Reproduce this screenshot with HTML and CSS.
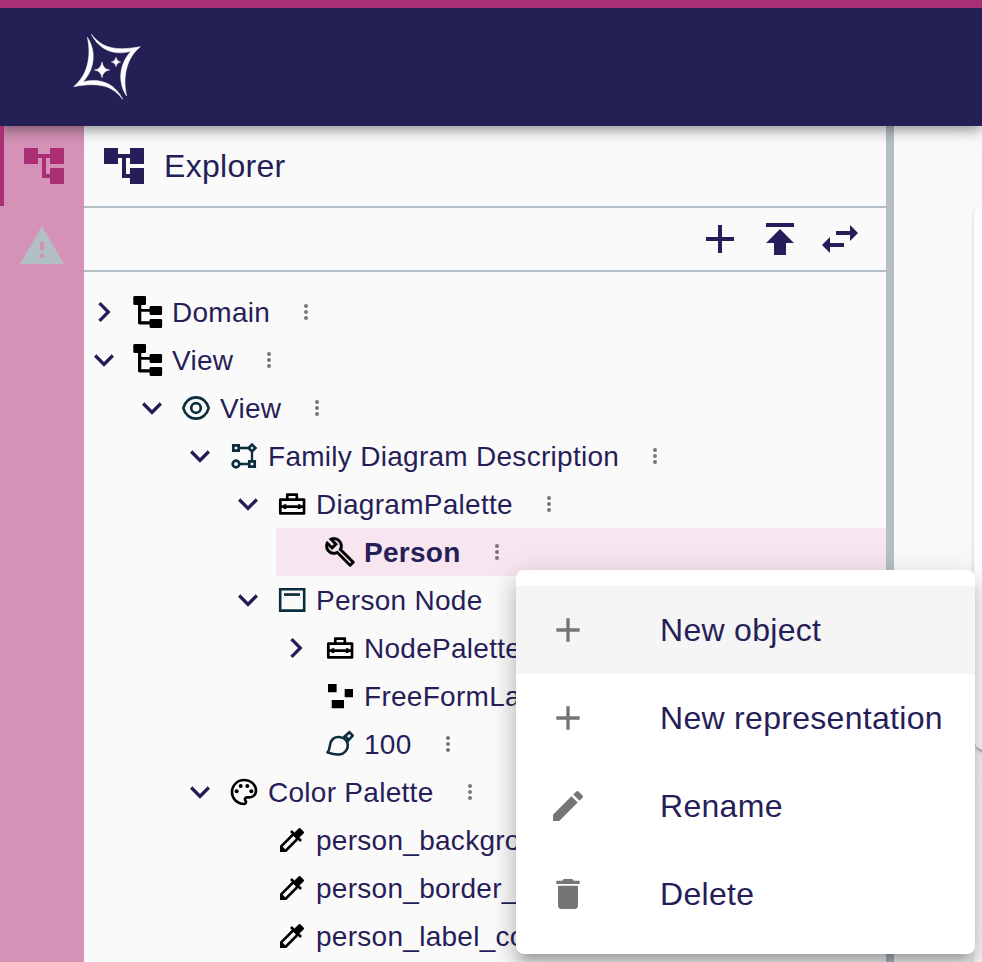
FILE: index.html
```html
<!DOCTYPE html>
<html lang="en">
<head>
<meta charset="utf-8">
<title>Explorer</title>
<link rel="stylesheet" href="styles.css">
</head>
<body>
<svg class="sprite" aria-hidden="true">
  <symbol id="account-tree" viewBox="0 0 24 24"><path d="M22 11V3h-7v3H9V3H2v8h7V8h2v10h4v3h7v-8h-7v3h-2V8h2v3z"/></symbol>
  <symbol id="warning" viewBox="0 0 24 24"><path d="M1 21h22L12 2 1 21zm12-3h-2v-2h2v2zm0-4h-2v-4h2v4z"/></symbol>
  <symbol id="add" viewBox="0 0 24 24"><path d="M19 13h-6v6h-2v-6H5v-2h6V5h2v6h6v2z"/></symbol>
  <symbol id="publish" viewBox="0 0 24 24"><path d="M5 4v2h14V4H5zm0 10h4v6h6v-6h4l-7-7-7 7z"/></symbol>
  <symbol id="swap" viewBox="0 0 24 24"><path d="M6.99 11L3 15l3.99 4v-3H14v-2H6.99v-3zM21 9l-3.99-4v3H10v2h7.01v3L21 9z"/></symbol>
  <symbol id="right" viewBox="0 0 24 24"><path d="M10 6L8.59 7.41 13.17 12l-4.58 4.59L10 18l6-6z"/></symbol>
  <symbol id="down" viewBox="0 0 24 24"><path d="M16.59 8.59L12 13.17 7.41 8.59 6 10l6 6 6-6z"/></symbol>
  <symbol id="more" viewBox="0 0 24 24"><circle cx="12" cy="6" r="2"/><circle cx="12" cy="12" r="2"/><circle cx="12" cy="18" r="2"/></symbol>
  <symbol id="edit" viewBox="0 0 24 24"><path d="M3 17.25V21h3.75L17.81 9.94l-3.75-3.75L3 17.25zM20.71 7.04c.39-.39.39-1.02 0-1.41l-2.34-2.34a.9959.9959 0 0 0-1.41 0l-1.83 1.83 3.75 3.75 1.83-1.83z"/></symbol>
  <symbol id="delete" viewBox="0 0 24 24"><path d="M6 19c0 1.1.9 2 2 2h8c1.1 0 2-.9 2-2V7H6v12zM19 4h-3.5l-1-1h-5l-1 1H5v2h14V4z"/></symbol>
  <symbol id="model" viewBox="0 0 32 32"><path d="M6 8h3.3v5H18v2.800H9.300v9.500H18v3.200H7.300L6 27.400z"/><rect x="1.300" y="0" width="12.700" height="9" rx="1.300"/><rect x="17.600" y="10" width="12.500" height="9" rx="1.300"/><rect x="17.600" y="23" width="12.500" height="9" rx="1.300"/></symbol>
  <symbol id="eye" viewBox="0 0 32 32"><g fill="none" stroke="currentColor" stroke-width="2.700"><path d="M3.300 16C5 9.500 10 5.300 16 5.300S27 9.500 28.700 16C27 22.500 22 26.700 16 26.700S5 22.500 3.300 16z"/><circle cx="16" cy="16" r="4.800"/></g></symbol>
  <symbol id="diagram" viewBox="0 0 32 32"><g fill="none" stroke="currentColor" stroke-width="2.700"><path d="M5.300 5.300h5.400v5.400H5.300zM21.300 21.300h5.400v5.400h-5.400zM24 4.600L27.400 8 24 11.400 20.600 8z"/><circle cx="8" cy="24" r="3.300"/><path d="M12 8h8M24 12v9M12 24h9" stroke-width="2.300"/></g></symbol>
  <symbol id="toolbox" viewBox="0 0 32 32"><g fill="none" stroke="currentColor" stroke-width="2.700" stroke-linejoin="round"><path d="M4.300 11.700h23.700v13.700H4.300zM11.300 11V6.700h9.500V11M4.300 18.700H28"/><path d="M9 16.300v4.800M23.200 16.300v4.800"/></g></symbol>
  <symbol id="wrench" viewBox="0 0 24 24"><path stroke="currentColor" stroke-width=".25" d="M22.610 18.990l-9.080-9.080c.93-2.340.45-5.100-1.440-7C9.790.61 6.210.4 3.660 2.260L7.500 6.110 6.080 7.520 2.250 3.690C.39 6.230.6 9.820 2.900 12.110c1.860 1.860 4.570 2.350 6.890 1.480l9.110 9.110c.39.39 1.020.39 1.410 0l2.300-2.300c.4-.38.4-1.010 0-1.410zm-3 1.600l-9.460-9.460c-.61.45-1.290.72-2 .82-1.360.2-2.790-.21-3.830-1.250C3.370 9.760 2.930 8.500 3 7.260l3.090 3.090 4.240-4.240-3.090-3.090c1.240-.07 2.490.37 3.440 1.310 1.080 1.080 1.490 2.570 1.240 3.960-.12.71-.42 1.370-.88 1.960l9.450 9.450-.88.89z"/></symbol>
  <symbol id="node" viewBox="0 0 32 32"><path d="M4.200 5.200h24v21.400h-24z" fill="none" stroke="currentColor" stroke-width="2.600"/><path d="M8 9.200h16v2.700H8z"/></symbol>
  <symbol id="freeform" viewBox="0 0 32 32"><path d="M4 4h8.600v8.300H4zM20.700 9h8.300v8.300h-8.300zM7.700 20H20v8.300H7.700z"/></symbol>
  <symbol id="brush" viewBox="0 0 32 32"><g fill="none" stroke="currentColor" stroke-width="2.600" stroke-linejoin="round"><path d="M3.400 24.400C6 22 5.400 18.500 6.600 14.500 8.400 10 12.500 8.500 16.500 9.200c4 .8 7.100 4 7.300 7.800.2 4.500-3.300 9-8.300 9.500-4.500.4-8.500-.8-12.100-2.100z"/><path d="M19.500 9.500l5.900-5.300 3.300 3.400-5.300 5.900M21.300 8l3.300 3.700"/></g></symbol>
  <symbol id="palette" viewBox="0 0 24 24"><path d="M12 22C6.490 22 2 17.510 2 12S6.490 2 12 2s10 4.040 10 9c0 3.310-2.690 6-6 6h-1.770c-.28 0-.5.22-.5.5 0 .12.05.23.13.33.41.47.64 1.060.64 1.670 0 1.380-1.120 2.500-2.500 2.500zm0-18c-4.410 0-8 3.590-8 8s3.590 8 8 8c.28 0 .5-.22.5-.5 0-.16-.08-.28-.14-.35-.41-.46-.63-1.050-.63-1.650 0-1.380 1.120-2.500 2.500-2.500H16c2.210 0 4-1.790 4-4 0-3.860-3.590-7-8-7z"/><circle cx="6.500" cy="11.500" r="1.500"/><circle cx="9.500" cy="7.500" r="1.500"/><circle cx="14.500" cy="7.500" r="1.500"/><circle cx="17.500" cy="11.500" r="1.500"/></symbol>
  <symbol id="dropper" viewBox="0 0 24 24"><path d="M20.710 5.630l-2.340-2.340c-.39-.39-1.020-.39-1.410 0l-3.120 3.120-1.930-1.910-1.410 1.410 1.420 1.420L3 16.250V21h4.750l8.920-8.920 1.420 1.420 1.410-1.410-1.920-1.920 3.120-3.120c.4-.4.4-1.030.01-1.420zM6.920 19L5 17.080l8.060-8.060 1.920 1.920L6.920 19z"/></symbol>
</svg>

<header class="appbar">
  <svg class="logo" viewBox="0 0 300 270">
    <g id="arc"><path d="M94 27C123 66 160 80 241 65C200 98 187 155 200 213C174 175 175 120 213 79C165 92 118 77 94 27z"/></g>
    <use href="#arc" transform="rotate(180 141 125)"/>
    <path d="M126 111Q129 132 149 135Q129 138 126 158Q123 138 103 135Q123 132 126 111zM168 97Q170 109 182 111Q170 113 168 125Q166 113 154 111Q166 109 168 97z"/>
  </svg>
</header>

<div class="workbench">
  <nav class="rail">
    <div class="rail-item active"><svg class="i48"><use href="#account-tree"/></svg></div>
    <div class="rail-item"><svg class="i48"><use href="#warning"/></svg></div>
  </nav>

  <section class="explorer">
    <div class="title"><svg class="i48"><use href="#account-tree"/></svg><h1>Explorer</h1></div>
    <div class="toolbar">
      <svg class="i48"><use href="#add"/></svg>
      <svg class="i48"><use href="#publish"/></svg>
      <svg class="i48"><use href="#swap"/></svg>
    </div>
    <ul class="tree">
      <li><div class="row"><svg class="i40"><use href="#right"/></svg><svg class="i32"><use href="#model"/></svg><span>Domain</span><svg class="more"><use href="#more"/></svg></div></li>
      <li><div class="row"><svg class="i40"><use href="#down"/></svg><svg class="i32"><use href="#model"/></svg><span>View</span><svg class="more"><use href="#more"/></svg></div>
        <ul>
          <li><div class="row"><svg class="i40"><use href="#down"/></svg><svg class="i32 teal"><use href="#eye"/></svg><span>View</span><svg class="more"><use href="#more"/></svg></div>
            <ul>
              <li><div class="row"><svg class="i40"><use href="#down"/></svg><svg class="i32 teal"><use href="#diagram"/></svg><span>Family Diagram Description</span><svg class="more"><use href="#more"/></svg></div>
                <ul>
                  <li><div class="row"><svg class="i40"><use href="#down"/></svg><svg class="i32"><use href="#toolbox"/></svg><span>DiagramPalette</span><svg class="more"><use href="#more"/></svg></div>
                    <ul>
                      <li><div class="row leaf selected"><svg class="i32"><use href="#wrench"/></svg><span>Person</span><svg class="more"><use href="#more"/></svg></div></li>
                    </ul>
                  </li>
                  <li><div class="row"><svg class="i40"><use href="#down"/></svg><svg class="i32 teal"><use href="#node"/></svg><span>Person Node</span></div>
                    <ul>
                      <li><div class="row"><svg class="i40"><use href="#right"/></svg><svg class="i32"><use href="#toolbox"/></svg><span>NodePalette</span></div></li>
                      <li><div class="row leaf"><svg class="i32"><use href="#freeform"/></svg><span>FreeFormLa</span></div></li>
                      <li><div class="row leaf"><svg class="i32 teal"><use href="#brush"/></svg><span>100</span><svg class="more"><use href="#more"/></svg></div></li>
                    </ul>
                  </li>
                </ul>
              </li>
              <li><div class="row"><svg class="i40"><use href="#down"/></svg><svg class="i32"><use href="#palette"/></svg><span>Color Palette</span><svg class="more"><use href="#more"/></svg></div>
                <ul>
                  <li><div class="row leaf"><svg class="i32"><use href="#dropper"/></svg><span>person_backgro</span></div></li>
                  <li><div class="row leaf"><svg class="i32"><use href="#dropper"/></svg><span>person_border_</span></div></li>
                  <li><div class="row leaf"><svg class="i32"><use href="#dropper"/></svg><span>person_label_co</span></div></li>
                </ul>
              </li>
            </ul>
          </li>
        </ul>
      </li>
    </ul>
  </section>
  <div class="splitter"></div>
  <main class="content"><div class="card"></div><div class="card second"></div></main>
</div>

<ul class="menu">
  <li class="hover"><svg class="i40"><use href="#add"/></svg>New object</li>
  <li><svg class="i40"><use href="#add"/></svg>New representation</li>
  <li><svg class="i40"><use href="#edit"/></svg>Rename</li>
  <li><svg class="i40"><use href="#delete"/></svg>Delete</li>
</ul>
</body>
</html>
```
FILE: styles.css
```css
* { box-sizing: border-box; }
body {
  margin: 0;
  height: 962px;
  overflow: hidden;
  position: relative;
  display: flex;
  flex-direction: column;
  background: #fafafa;
  color: #261e58;
  font-family: "Liberation Sans", Arial, sans-serif;
}
ul { list-style: none; margin: 0; padding: 0; }
svg { display: block; flex: none; fill: currentColor; }
.sprite { position: absolute; width: 0; height: 0; }
.i48 { width: 48px; height: 48px; }
.i40 { width: 40px; height: 40px; }
.i32 { width: 32px; height: 32px; color: #000; }
.teal { color: #0b2e3f; }

.appbar {
  position: relative;
  z-index: 1;
  flex: none;
  height: 126px;
  padding: 17px 0 0 60px;
  border-top: 8px solid #ab2f75;
  background: #241f54;
  color: #fff;
  box-shadow: 0 4px 8px -2px rgba(0,0,0,.2), 0 8px 10px rgba(0,0,0,.14), 0 2px 20px rgba(0,0,0,.12);
}
.logo { width: 100px; height: 90px; stroke: #fff; stroke-width: 1.5px; }

.workbench { flex: 1; min-height: 0; display: flex; }
.rail { flex: none; width: 84px; background: #d493b6; }
.rail-item {
  height: 80px;
  display: flex;
  align-items: center;
  justify-content: center;
  color: #b3bfc5;
}
.rail-item.active { position: relative; padding-left: 4px; color: #ab2f75; }
.rail-item.active::before {
  content: "";
  position: absolute;
  z-index: 2;
  inset: 0 auto 0 0;
  width: 4px;
  background: #ab2f75;
}

.explorer { width: 802px; flex: none; overflow: hidden; }
.title {
  height: 82px;
  padding-left: 16px;
  display: flex;
  align-items: center;
  gap: 16px;
  border-bottom: 2px solid #b3bfc5;
}
.title h1 { margin: 0; font-size: 32px; font-weight: 400; letter-spacing: .3px; }
.toolbar {
  height: 64px;
  padding-right: 22px;
  display: flex;
  align-items: center;
  justify-content: flex-end;
  gap: 12px;
  border-bottom: 2px solid #b3bfc5;
}
.tree { padding-top: 16px; }
.tree ul { padding-left: 48px; }
.row {
  height: 48px;
  display: flex;
  align-items: center;
  gap: 8px;
  font-size: 28px;
  letter-spacing: .28px;
  white-space: nowrap;
}
.row span { padding-top: 2px; }
.row.leaf { padding-left: 48px; }
.row.selected { background: #f7e6ef; font-weight: 700; }
.more { width: 24px; height: 24px; margin-left: 16px; color: #757575; }

.splitter { flex: none; width: 8px; background: #b3bfc5; }
.content { flex: 1; padding: 80px 0 0 80px; overflow: hidden; }
.card {
  width: 100px;
  height: 544px;
  border-radius: 10px;
  background: #fff;
  box-shadow: 0 4px 2px -2px rgba(0,0,0,.2), 0 2px 2px rgba(0,0,0,.14), 0 2px 6px rgba(0,0,0,.12);
}
.card.second { height: 260px; margin-top: 30px; background: #fafafa; box-shadow: 0 2px 6px rgba(0,0,0,.12); }

.menu {
  position: absolute;
  z-index: 3;
  left: 516px;
  top: 570px;
  width: 459px;
  padding: 16px 0;
  border-radius: 8px;
  background: #fff;
  box-shadow: 0 10px 10px -6px rgba(0,0,0,.2), 0 16px 20px 2px rgba(0,0,0,.14), 0 6px 28px 4px rgba(0,0,0,.12);
}
.menu li {
  height: 88px;
  padding-left: 32px;
  display: flex;
  align-items: center;
  gap: 72px;
  font-size: 32px;
  letter-spacing: .3px;
  white-space: nowrap;
}
.menu .hover { background: #f5f5f5; }
.menu svg { color: #757575; }
```
